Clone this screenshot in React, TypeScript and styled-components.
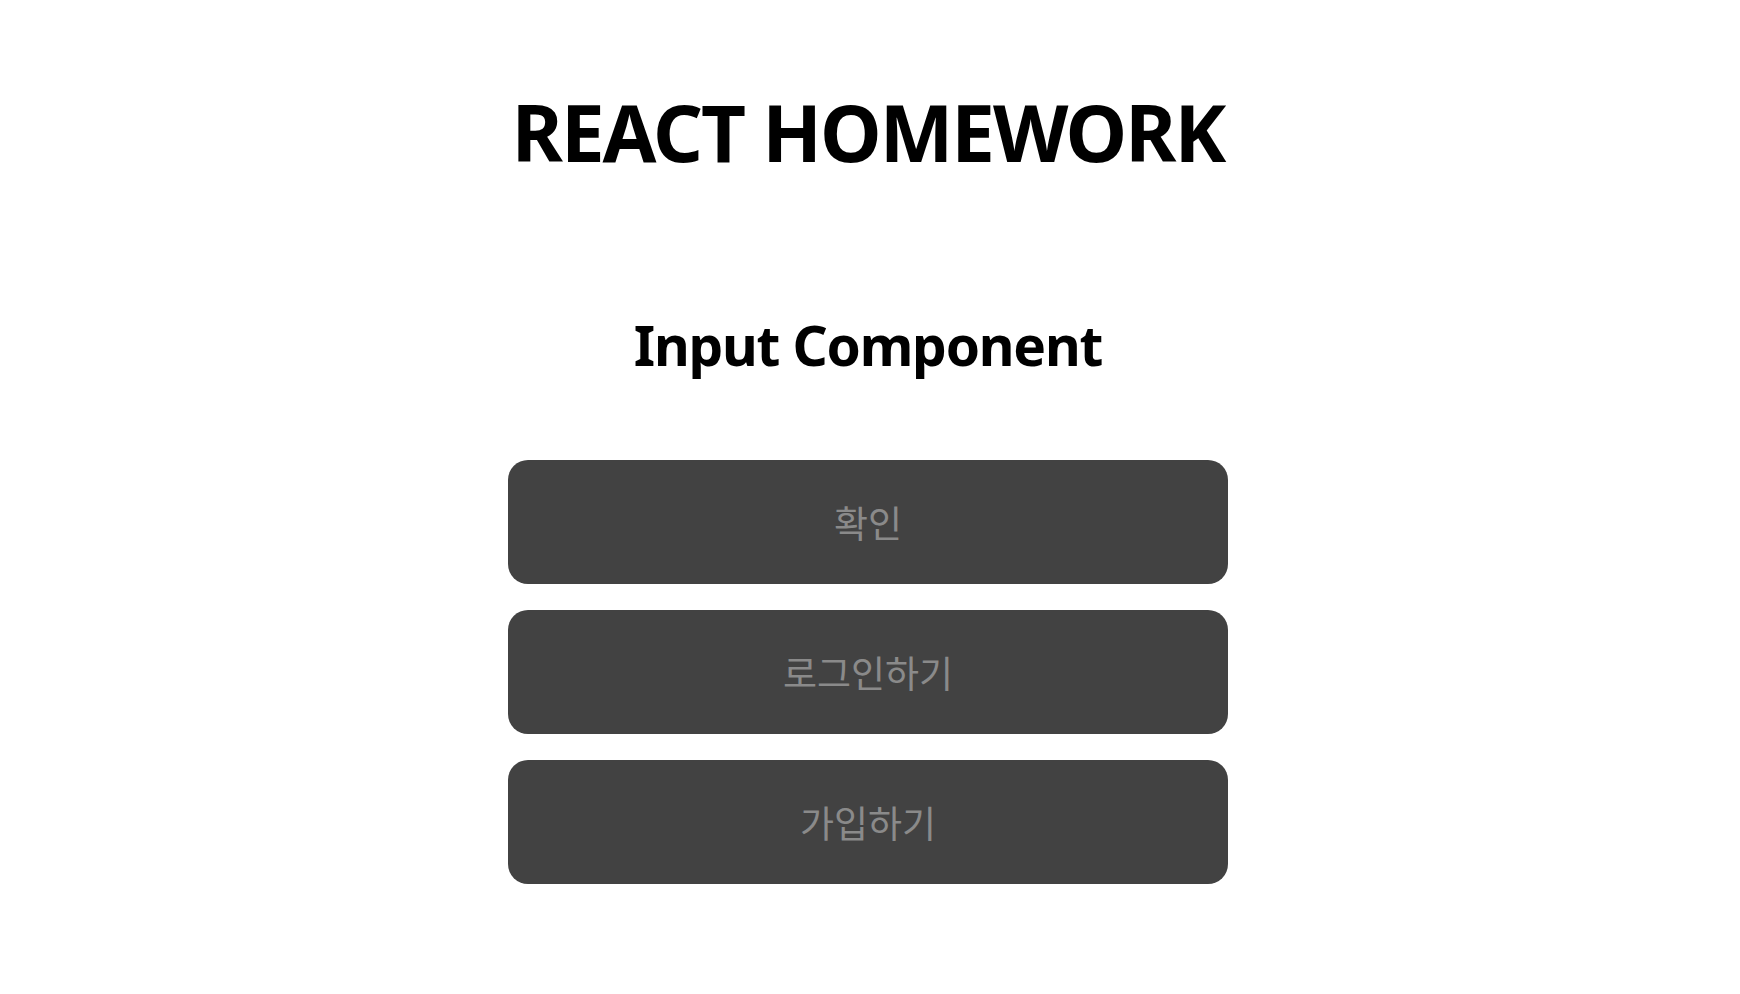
import styled, { createGlobalStyle } from "styled-components";

const GlobalStyle = createGlobalStyle`
  body {
    margin: 0;
    background: #ffffff;
    font-family: "Noto Sans", "Noto Sans CJK KR", sans-serif;
  }
`;

const Wrapper = styled.div`
  display: flex;
  flex-direction: column;
  align-items: center;
  padding: 82px 4px 0 0;
`;

const Title = styled.h1`
  margin: 0;
  font-size: 78px;
  font-weight: 700;
  letter-spacing: -2px;
  line-height: 100px;
  color: #000;
`;

const SubTitle = styled.h2`
  margin: 123px 0 0;
  font-size: 55px;
  font-weight: 700;
  letter-spacing: -1.2px;
  line-height: 80px;
  color: #000;
`;

const ButtonList = styled.div`
  display: flex;
  flex-direction: column;
  gap: 26px;
  margin-top: 75px;
`;

const Button = styled.button`
  width: 720px;
  height: 124px;
  border: none;
  border-radius: 20px;
  background-color: #424242;
  color: #8a8a8a;
  font-family: "Noto Sans CJK KR", sans-serif;
  font-size: 37px;
  cursor: pointer;
`;

const labels = ["확인", "로그인하기", "가입하기"];

export default function App() {
  return (
    <>
      <GlobalStyle />
      <Wrapper>
        <Title>REACT HOMEWORK</Title>
        <SubTitle>Input Component</SubTitle>
        <ButtonList>
          {labels.map((label) => (
            <Button key={label}>{label}</Button>
          ))}
        </ButtonList>
      </Wrapper>
    </>
  );
}
